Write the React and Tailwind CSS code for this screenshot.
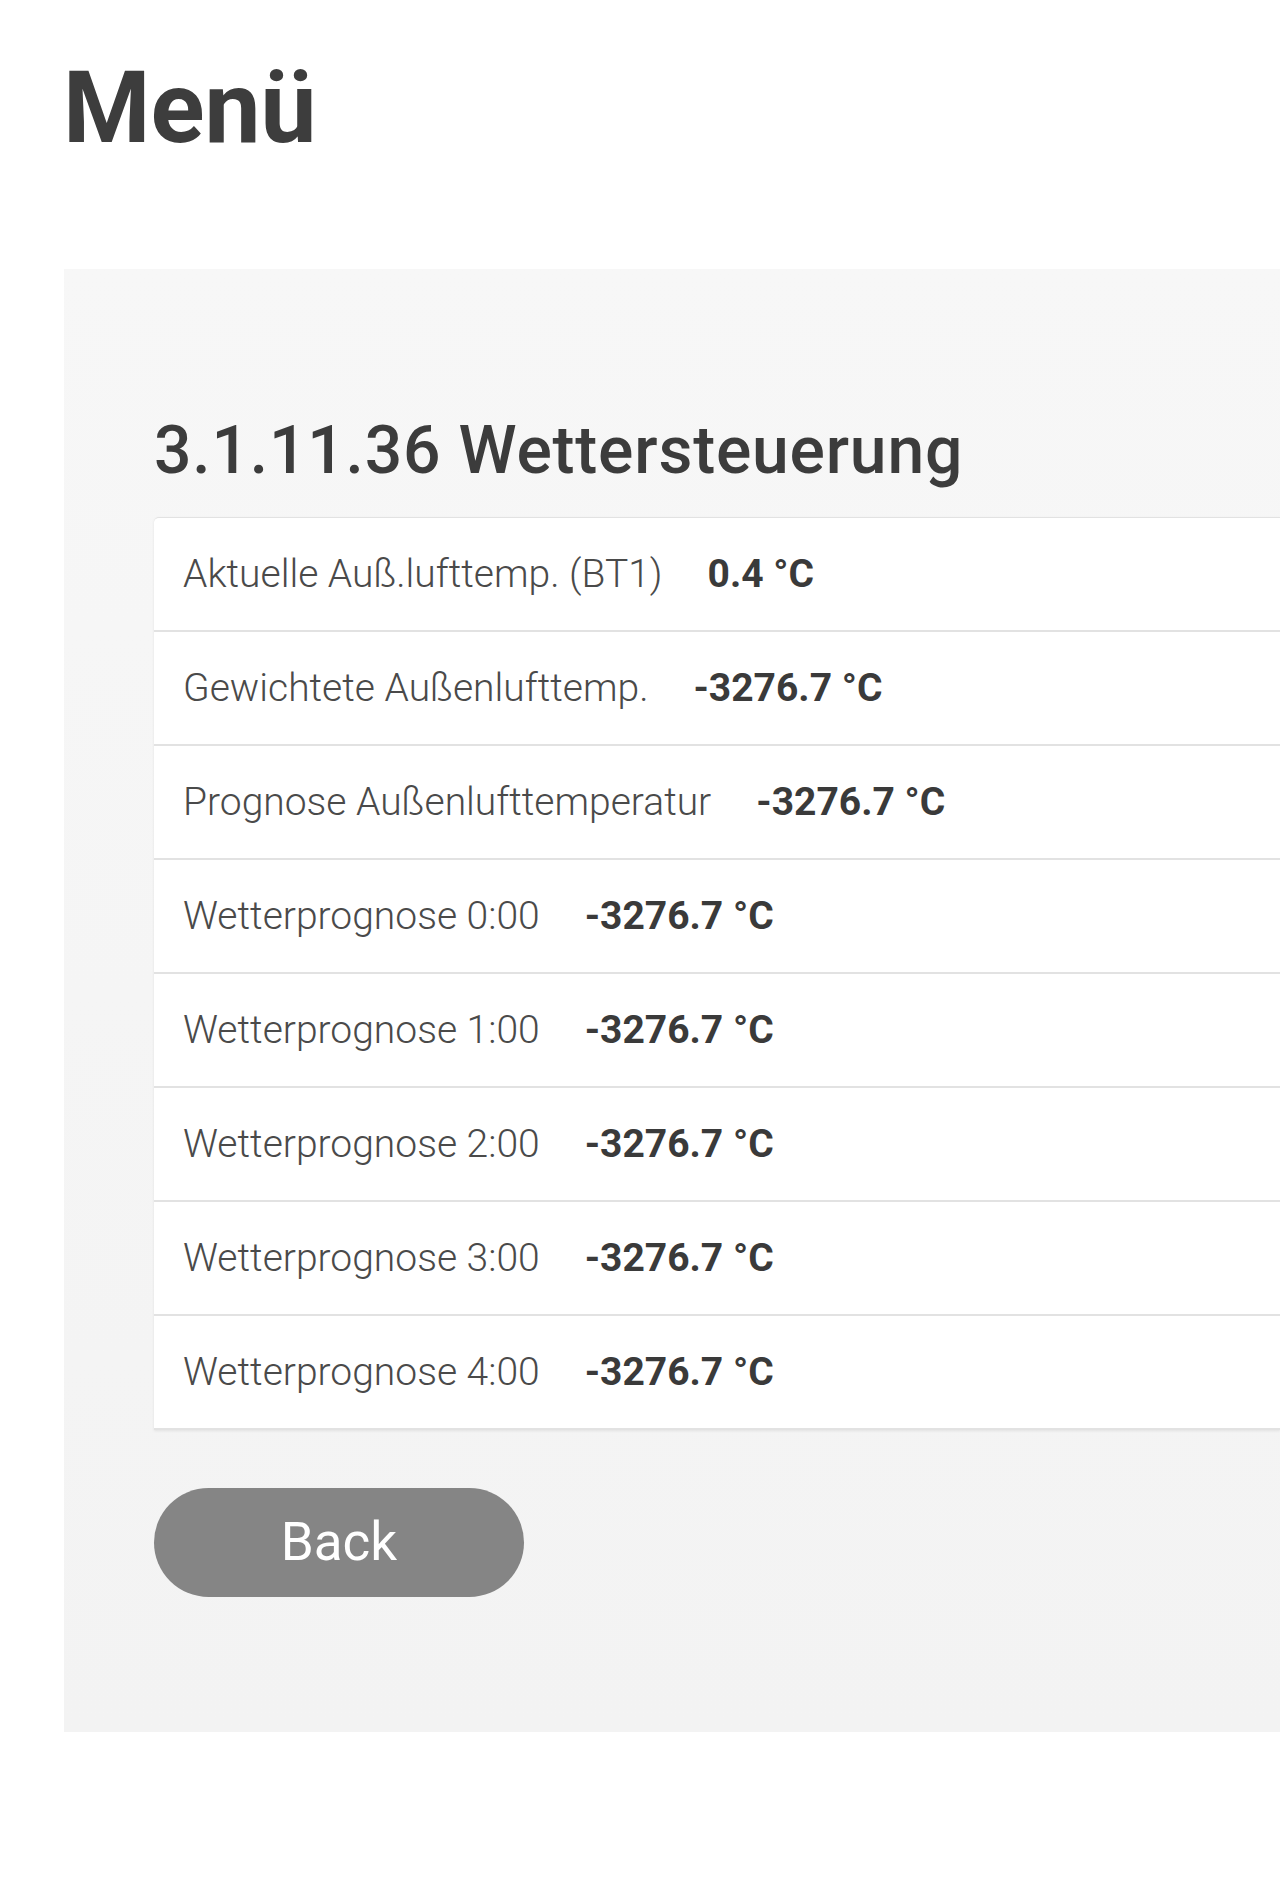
import React from 'react';

const rows = [
  { label: 'Aktuelle Auß.lufttemp. (BT1)', value: '0.4 °C' },
  { label: 'Gewichtete Außenlufttemp.', value: '-3276.7 °C' },
  { label: 'Prognose Außenlufttemperatur', value: '-3276.7 °C' },
  { label: 'Wetterprognose 0:00', value: '-3276.7 °C' },
  { label: 'Wetterprognose 1:00', value: '-3276.7 °C' },
  { label: 'Wetterprognose 2:00', value: '-3276.7 °C' },
  { label: 'Wetterprognose 3:00', value: '-3276.7 °C' },
  { label: 'Wetterprognose 4:00', value: '-3276.7 °C' },
];

const Row = ({ label, value }) => (
  <div className="flex items-center h-[114px] border-b-2 border-[#e2e2e2] pl-[29px]">
    <span className="text-[39px] font-light text-[#4a4a4a] whitespace-nowrap">{label}</span>
    <span className="ml-[45px] text-[39px] font-bold text-[#3a3a3a] whitespace-nowrap">{value}</span>
  </div>
);

export default function App() {
  return (
    <div className="min-h-[1886px] bg-white font-['Roboto',sans-serif] overflow-hidden">
      <h1 className="pt-[58px] pl-[63px] text-[100px] leading-none font-bold text-[#3d3d3d]">Menü</h1>

      {/* Menu panel */}
      <div className="mt-[111px] ml-[64px] pl-[90px] pt-[149px] pb-[135px] bg-gradient-to-b from-[#f7f7f7] to-[#f3f3f3]">
        <h2 className="text-[66px] leading-none font-medium tracking-[0.8px] text-[#3c3c3c] whitespace-nowrap">
          3.1.11.36 Wettersteuerung
        </h2>

        <div className="mt-[33px] bg-white border-t border-[#e2e2e2] rounded-tl-[5px] shadow-[0_1px_3px_rgba(0,0,0,0.08)]">
          {rows.map((r) => (
            <Row key={r.label} label={r.label} value={r.value} />
          ))}
        </div>

        <button className="mt-[58px] w-[370px] h-[109px] rounded-full bg-[#858585] text-white text-[53px] leading-none font-normal">
          Back
        </button>
      </div>
    </div>
  );
}
